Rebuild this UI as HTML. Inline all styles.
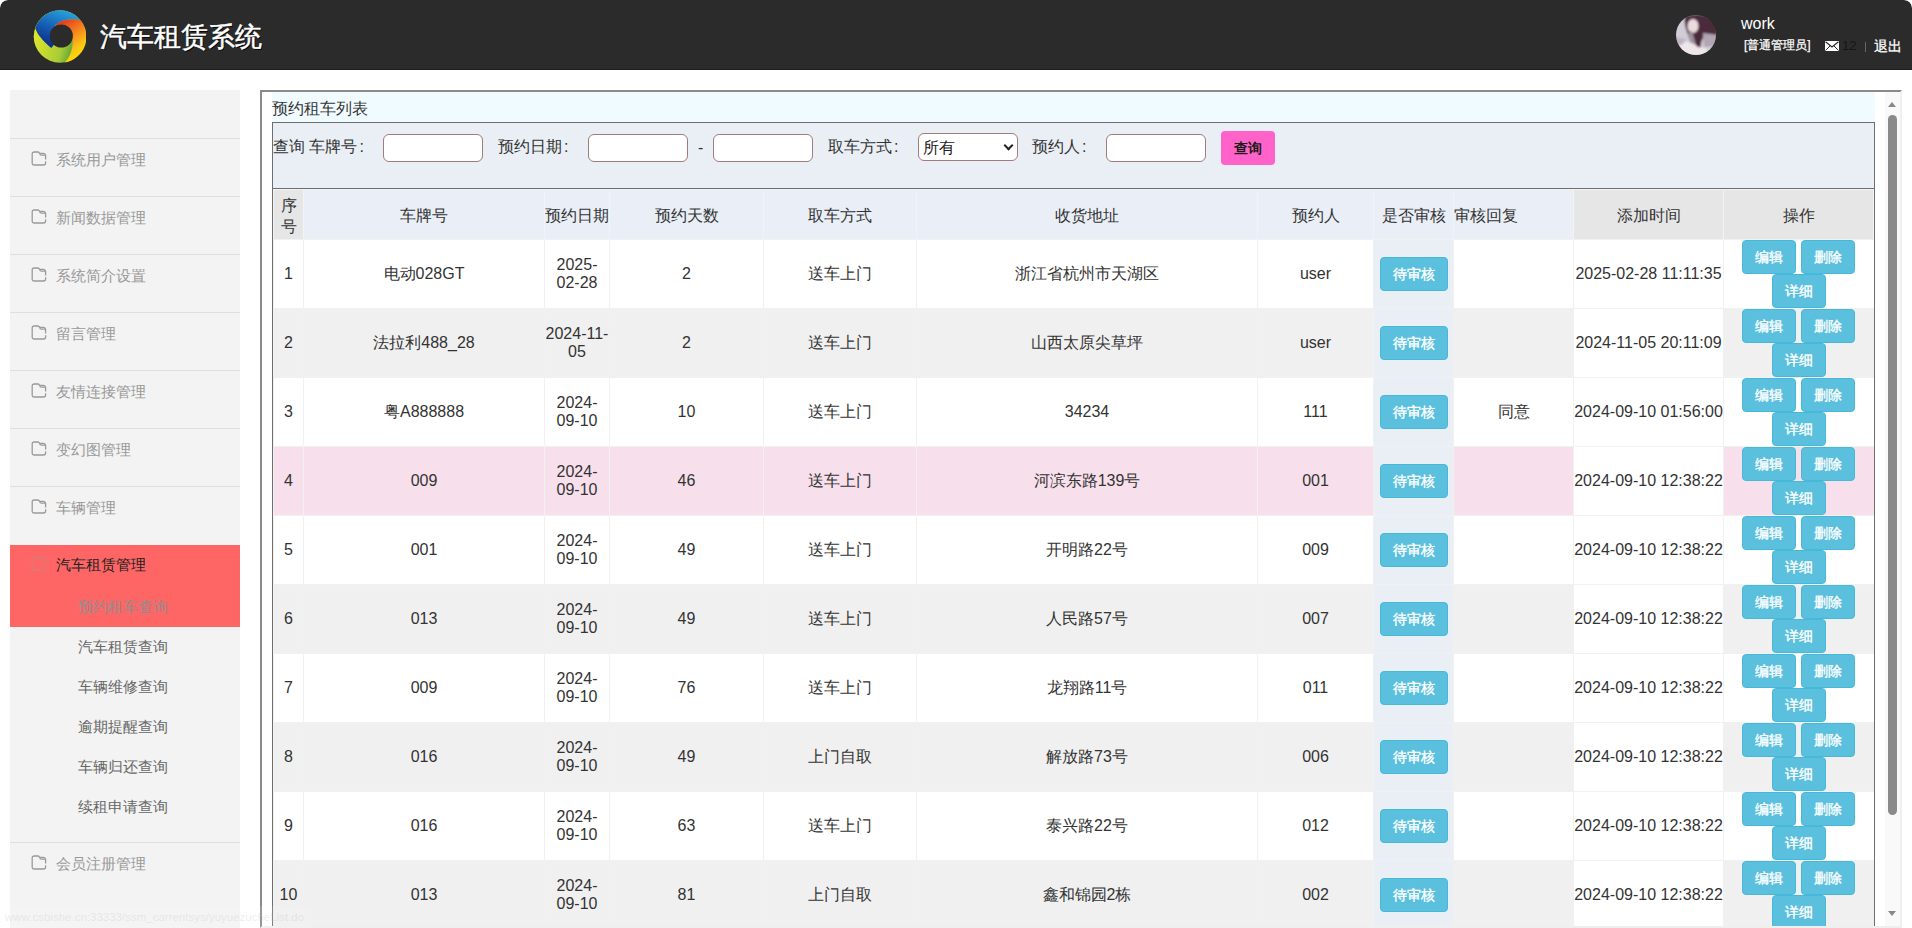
<!DOCTYPE html>
<html><head><meta charset="utf-8"><title>汽车租赁系统</title>
<style>
*{box-sizing:border-box}
html,body{margin:0;padding:0;width:1912px;height:928px;overflow:hidden;background:#fff;font-family:"Liberation Sans",sans-serif;color:#333}
.abs{position:absolute}
#hd{position:absolute;left:0;top:0;width:1912px;height:70px;background:#2b2b2b;border-bottom:1px solid #1e1e1e;border-radius:8px 8px 0 0}
#logo{position:absolute;left:33px;top:10px;width:53px;height:53px}
#title{position:absolute;left:100px;top:19px;font-family:"Liberation Serif",serif;font-size:27px;font-weight:normal;-webkit-text-stroke:0.5px #fff;color:#fff;letter-spacing:0px;line-height:36px;white-space:nowrap;text-shadow:1px 1px 0 #000}
#avatar{position:absolute;left:1676px;top:15px;width:40px;height:40px;border-radius:50%;overflow:hidden}
#uname{position:absolute;left:1741px;top:15px;font-size:16px;color:#fff;line-height:18px}
#urole{position:absolute;left:1744px;top:37px;font-size:12px;color:#fff;line-height:16px;white-space:nowrap;-webkit-text-stroke:0.25px #fff}
#mail{position:absolute;left:1825px;top:41px;width:14px;height:10px}
#mcount{position:absolute;left:1842px;top:38px;font-size:13px;color:#151515;line-height:16px}
#sep{position:absolute;left:1865px;top:42px;width:1px;height:10px;background:#666}
#logout{position:absolute;left:1874px;top:37px;font-size:14px;color:#fff;line-height:18px;white-space:nowrap;-webkit-text-stroke:0.3px #fff}

#side{position:absolute;left:10px;top:90px;width:230px;height:838px;background:#f3f3f3}
.mi{position:absolute;left:10px;width:230px;height:58px;border-top:1px solid #dedede}
.mi span{position:absolute;left:46px;top:11px;font-size:15px;line-height:20px;color:#999;white-space:nowrap}
.fold{position:absolute;left:21px;top:12px;width:16px;height:16px;line-height:0}
#act{position:absolute;left:10px;top:545px;width:230px;height:82px;background:#fe6665}
#act span{position:absolute;left:46px;top:10px;font-size:15px;line-height:20px;color:#222;white-space:nowrap}
#act .fold{top:11px;opacity:.35}
#act .s1{position:absolute;left:68px;top:52px;font-size:15px;line-height:20px;color:#8e8e8e;white-space:nowrap}
.sub{position:absolute;left:78px;font-size:15px;line-height:20px;color:#666;white-space:nowrap}

#frame{position:absolute;left:260px;top:90px;width:1642px;height:838px;border-style:solid;border-width:2px;border-color:#8a8a8a #efefef #efefef #8a8a8a;background:#fff;overflow:hidden}
#sb{position:absolute;left:1885px;top:92px;width:15px;height:834px;background:#f9f9f9}
#sb .up{position:absolute;left:3px;top:10px;width:0;height:0;border-left:4.5px solid transparent;border-right:4.5px solid transparent;border-bottom:5px solid #888}
#sb .dn{position:absolute;left:3px;top:819px;width:0;height:0;border-left:4.5px solid transparent;border-right:4.5px solid transparent;border-top:5px solid #888}
#sb .th{position:absolute;left:3px;top:23px;width:9px;height:700px;background:#8a8a8a;border-radius:5px}

#ttl{position:absolute;left:272px;top:92px;width:1603px;height:30px;background:#f0fbff;font-size:16px;line-height:33px;padding-left:0;white-space:nowrap}
#panel{position:absolute;left:272px;top:122px;width:1603px;height:804px;border:1px solid #6e6e6e;border-bottom:0;background:#fff;overflow:hidden}
#srch{position:absolute;left:0;top:0;width:1601px;height:66px;background:#eaeff6;border-bottom:1px solid #6e6e6e}
.lb{position:absolute;top:13px;font-size:16px;line-height:22px;white-space:nowrap;color:#333}
.c{font-style:normal;margin-left:2px}
.ip{position:absolute;top:11px;width:100px;height:28px;border:1px solid #a07d7d;border-radius:6px;background:#fff}
.sel{position:absolute;top:10px;width:100px;height:28px;border:1px solid #a07d7d;border-radius:6px;background:#fff;font-size:16px;line-height:28px;padding-left:4px;color:#222}
.sel i{position:absolute;right:5px;top:8px;width:7px;height:7px;border-right:2px solid #222;border-bottom:2px solid #222;transform:rotate(45deg)}
.pbtn{position:absolute;left:948px;top:8px;width:54px;height:34px;background:#ff63c9;border-radius:4px;font-size:14px;line-height:34px;text-align:center;color:#1a1a1a;font-weight:bold}

table{position:absolute;left:0;top:66px;border-collapse:separate;border-spacing:0;table-layout:fixed;width:1601px}
td,th{padding:0;border-left:1px solid #f1f1f1;border-top:1px solid #f1f1f1;text-align:center;font-size:16px;font-weight:normal;line-height:17px;color:#333;vertical-align:middle;overflow:hidden}
th{height:50px;background:#eaeff7;border-color:#f1f4f6;line-height:21px;padding-top:2px}
th.g{background:#e6e6e6}
th.l{text-align:left}
td{height:69px;background:#fff;padding-bottom:2px}
td.dt{line-height:18px;padding-bottom:0}
td.op,td.sh{padding-bottom:0}
tr.odd td{background:#f0f0f0}
tr.hov td{background:#f7e0eb}
td.sh,tr.odd td.sh,tr.hov td.sh{background:#eaeff6}
td.tm,tr.odd td.tm,tr.hov td.tm{background:#fff}
.btn{display:inline-block;height:34px;padding:0 12px;font-size:14px;line-height:32px;border:1px solid #46b8da;border-radius:4px;background:#5bc0de;color:#fff;white-space:nowrap;vertical-align:top;font-weight:normal;-webkit-text-stroke:0.35px #fff}
td.op{line-height:0;font-size:0;text-align:left;padding-left:18px}
td.op .btn{width:54px}
td.op .b2{margin-left:5px}
td.op .b3{margin-left:30px}
td.sh .btn{width:68px;font-weight:normal}
</style></head><body>
<div id="hd">
 <svg id="logo" viewBox="0 0 53 53">
  <defs>
   <linearGradient id="gb" x1="0.8" y1="0" x2="0.3" y2="1"><stop offset="0" stop-color="#27a9e1"/><stop offset="0.5" stop-color="#1763b8"/><stop offset="1" stop-color="#0a2a86"/></linearGradient>
   <linearGradient id="go" x1="0.1" y1="0" x2="0.6" y2="1"><stop offset="0" stop-color="#d9281f"/><stop offset="0.4" stop-color="#f47a20"/><stop offset="0.75" stop-color="#fbc316"/><stop offset="1" stop-color="#ffe000"/></linearGradient>
   <linearGradient id="gg" x1="0" y1="0.3" x2="1" y2="0.6"><stop offset="0" stop-color="#e6e82a"/><stop offset="0.6" stop-color="#a9cc36"/><stop offset="1" stop-color="#1f8236"/></linearGradient>
  </defs>
  <circle cx="27" cy="26.5" r="26.3" fill="url(#gg)"/>
  <path d="M2.2 18.3 A26.3 26.3 0 0 1 47.4 9.9 C40 8.5 30 8.5 22.2 15.1 L28 26 L18.3 38 C12 33 5 26 2.2 18.3 Z" fill="url(#gb)"/>
  <path d="M22.2 15.1 C30 8.5 40 8.5 47.4 9.9 A26.3 26.3 0 0 1 31.9 52.6 C36 48 40.5 40 39.5 29 L28 26 Z" fill="url(#go)"/>
  <circle cx="28.3" cy="26" r="11.6" fill="#2b2b2b"/>
 </svg>
 <div id="title">汽车租赁系统</div>
 <div id="avatar"><svg width="40" height="40" viewBox="0 0 40 40"><defs><filter id="bl"><feGaussianBlur stdDeviation="0.9"/></filter></defs><g filter="url(#bl)"><rect x="-4" y="-4" width="48" height="48" fill="#d3ccd9"/><path d="M9 2 C16 -2 30 -2 38 6 C42 12 42 20 40 24 L30 20 C26 22 24 30 25 34 L18 34 C14 26 12 20 10 14 C9 10 8 6 9 2Z" fill="#4b2b3b"/><ellipse cx="17" cy="11" rx="5.5" ry="7" fill="#eadcdf"/><path d="M27 18 L42 20 L42 31 L28 32Z" fill="#b3a5b3"/><path d="M12 18 L16 16 L20 30 L15 31Z" fill="#9c939c"/><path d="M2 30 C8 25 16 27 22 32 L30 33 L34 42 L-2 42Z" fill="#efe6ea"/><path d="M-2 22 L10 24 L6 30 L-2 30Z" fill="#bdb6c0"/></g></svg></div>
 <div id="uname">work</div>
 <div id="urole">[普通管理员]</div>
 <svg id="mail" viewBox="0 0 14 10"><rect x="0" y="0" width="14" height="10" fill="#fff"/><path d="M0.5 0.8 L7 6 L13.5 0.8" stroke="#2b2b2b" stroke-width="1.2" fill="none"/><path d="M0.5 9.5 L5 5 M13.5 9.5 L9 5" stroke="#2b2b2b" stroke-width="1" fill="none"/></svg>
 <div id="mcount">12</div>
 <div id="sep"></div>
 <div id="logout">退出</div>
</div>

<div id="side"></div>
<div class="mi" style="top:90px;height:48px;border-top:none"></div>
<div class="mi" style="top:138px"><i class="fold"><svg width="16" height="16" viewBox="0 0 16 16"><path d="M1.2 12 V3 Q1.2 1 3.2 1 H6.6 Q7.8 1 8.3 2 L8.6 2.4 H12.6 Q14.4 2.4 14.6 4.4 V8.4 M14.6 10.2 V12 Q14.6 14 12.6 14 H3.2 Q1.2 14 1.2 12 M8.6 2.4 Q9 4.2 10.4 4.2 H14.4" stroke="#9a9a9a" stroke-width="1.3" fill="none"/></svg></i><span>系统用户管理</span></div>
<div class="mi" style="top:196px"><i class="fold"><svg width="16" height="16" viewBox="0 0 16 16"><path d="M1.2 12 V3 Q1.2 1 3.2 1 H6.6 Q7.8 1 8.3 2 L8.6 2.4 H12.6 Q14.4 2.4 14.6 4.4 V8.4 M14.6 10.2 V12 Q14.6 14 12.6 14 H3.2 Q1.2 14 1.2 12 M8.6 2.4 Q9 4.2 10.4 4.2 H14.4" stroke="#9a9a9a" stroke-width="1.3" fill="none"/></svg></i><span>新闻数据管理</span></div>
<div class="mi" style="top:254px"><i class="fold"><svg width="16" height="16" viewBox="0 0 16 16"><path d="M1.2 12 V3 Q1.2 1 3.2 1 H6.6 Q7.8 1 8.3 2 L8.6 2.4 H12.6 Q14.4 2.4 14.6 4.4 V8.4 M14.6 10.2 V12 Q14.6 14 12.6 14 H3.2 Q1.2 14 1.2 12 M8.6 2.4 Q9 4.2 10.4 4.2 H14.4" stroke="#9a9a9a" stroke-width="1.3" fill="none"/></svg></i><span>系统简介设置</span></div>
<div class="mi" style="top:312px"><i class="fold"><svg width="16" height="16" viewBox="0 0 16 16"><path d="M1.2 12 V3 Q1.2 1 3.2 1 H6.6 Q7.8 1 8.3 2 L8.6 2.4 H12.6 Q14.4 2.4 14.6 4.4 V8.4 M14.6 10.2 V12 Q14.6 14 12.6 14 H3.2 Q1.2 14 1.2 12 M8.6 2.4 Q9 4.2 10.4 4.2 H14.4" stroke="#9a9a9a" stroke-width="1.3" fill="none"/></svg></i><span>留言管理</span></div>
<div class="mi" style="top:370px"><i class="fold"><svg width="16" height="16" viewBox="0 0 16 16"><path d="M1.2 12 V3 Q1.2 1 3.2 1 H6.6 Q7.8 1 8.3 2 L8.6 2.4 H12.6 Q14.4 2.4 14.6 4.4 V8.4 M14.6 10.2 V12 Q14.6 14 12.6 14 H3.2 Q1.2 14 1.2 12 M8.6 2.4 Q9 4.2 10.4 4.2 H14.4" stroke="#9a9a9a" stroke-width="1.3" fill="none"/></svg></i><span>友情连接管理</span></div>
<div class="mi" style="top:428px"><i class="fold"><svg width="16" height="16" viewBox="0 0 16 16"><path d="M1.2 12 V3 Q1.2 1 3.2 1 H6.6 Q7.8 1 8.3 2 L8.6 2.4 H12.6 Q14.4 2.4 14.6 4.4 V8.4 M14.6 10.2 V12 Q14.6 14 12.6 14 H3.2 Q1.2 14 1.2 12 M8.6 2.4 Q9 4.2 10.4 4.2 H14.4" stroke="#9a9a9a" stroke-width="1.3" fill="none"/></svg></i><span>变幻图管理</span></div>
<div class="mi" style="top:486px"><i class="fold"><svg width="16" height="16" viewBox="0 0 16 16"><path d="M1.2 12 V3 Q1.2 1 3.2 1 H6.6 Q7.8 1 8.3 2 L8.6 2.4 H12.6 Q14.4 2.4 14.6 4.4 V8.4 M14.6 10.2 V12 Q14.6 14 12.6 14 H3.2 Q1.2 14 1.2 12 M8.6 2.4 Q9 4.2 10.4 4.2 H14.4" stroke="#9a9a9a" stroke-width="1.3" fill="none"/></svg></i><span>车辆管理</span></div>
<div id="act"><i class="fold"><svg width="16" height="16" viewBox="0 0 16 16"><path d="M1.2 12 V3 Q1.2 1 3.2 1 H6.6 Q7.8 1 8.3 2 L8.6 2.4 H12.6 Q14.4 2.4 14.6 4.4 V8.4 M14.6 10.2 V12 Q14.6 14 12.6 14 H3.2 Q1.2 14 1.2 12 M8.6 2.4 Q9 4.2 10.4 4.2 H14.4" stroke="#9a9a9a" stroke-width="1.3" fill="none"/></svg></i><span>汽车租赁管理</span><div class="s1">预约租车查询</div></div>
<div class="sub" style="top:637px">汽车租赁查询</div>
<div class="sub" style="top:677px">车辆维修查询</div>
<div class="sub" style="top:717px">逾期提醒查询</div>
<div class="sub" style="top:757px">车辆归还查询</div>
<div class="sub" style="top:797px">续租申请查询</div>
<div class="mi" style="top:842px"><i class="fold"><svg width="16" height="16" viewBox="0 0 16 16"><path d="M1.2 12 V3 Q1.2 1 3.2 1 H6.6 Q7.8 1 8.3 2 L8.6 2.4 H12.6 Q14.4 2.4 14.6 4.4 V8.4 M14.6 10.2 V12 Q14.6 14 12.6 14 H3.2 Q1.2 14 1.2 12 M8.6 2.4 Q9 4.2 10.4 4.2 H14.4" stroke="#9a9a9a" stroke-width="1.3" fill="none"/></svg></i><span>会员注册管理</span></div>

<div id="frame"></div>
<div id="ttl">预约租车列表</div>
<div id="panel">
 <div id="srch">
  <div class="lb" style="left:0">查询 车牌号<i class="c">:</i></div>
  <div class="ip" style="left:110px"></div>
  <div class="lb" style="left:225px">预约日期<i class="c">:</i></div>
  <div class="ip" style="left:315px"></div>
  <div class="lb" style="left:425px;top:14px">-</div>
  <div class="ip" style="left:440px"></div>
  <div class="lb" style="left:555px">取车方式<i class="c">:</i></div>
  <div class="sel" style="left:645px">所有<i></i></div>
  <div class="lb" style="left:759px">预约人<i class="c">:</i></div>
  <div class="ip" style="left:833px"></div>
  <div class="pbtn">查询</div>
 </div>
 <table>
  <colgroup><col style="width:30px"><col style="width:241px"><col style="width:65px"><col style="width:154px"><col style="width:153px"><col style="width:341px"><col style="width:116px"><col style="width:80px"><col style="width:120px"><col style="width:150px"><col style="width:151px"></colgroup>
  <thead><tr><th class="g">序号</th><th>车牌号</th><th>预约日期</th><th>预约天数</th><th>取车方式</th><th>收货地址</th><th>预约人</th><th>是否审核</th><th class="l">审核回复</th><th class="g">添加时间</th><th class="g" style="border-right:1px solid #f4f6f9">操作</th></tr></thead>
  <tbody>
<tr><td>1</td><td>电动028GT</td><td class="dt">2025-<br>02-28</td><td>2</td><td>送车上门</td><td>浙江省杭州市天湖区</td><td>user</td><td class="sh"><span class="btn bi w3">待审核</span></td><td></td><td class="tm">2025-02-28 11:11:35</td><td class="op"><span class="btn bi">编辑</span><span class="btn bi b2">删除</span><br><span class="btn bi b3">详细</span></td></tr>
<tr class="odd"><td>2</td><td>法拉利488_28</td><td class="dt">2024-11-<br>05</td><td>2</td><td>送车上门</td><td>山西太原尖草坪</td><td>user</td><td class="sh"><span class="btn bi w3">待审核</span></td><td></td><td class="tm">2024-11-05 20:11:09</td><td class="op"><span class="btn bi">编辑</span><span class="btn bi b2">删除</span><br><span class="btn bi b3">详细</span></td></tr>
<tr><td>3</td><td>粤A888888</td><td class="dt">2024-<br>09-10</td><td>10</td><td>送车上门</td><td>34234</td><td>111</td><td class="sh"><span class="btn bi w3">待审核</span></td><td>同意</td><td class="tm">2024-09-10 01:56:00</td><td class="op"><span class="btn bi">编辑</span><span class="btn bi b2">删除</span><br><span class="btn bi b3">详细</span></td></tr>
<tr class="hov"><td>4</td><td>009</td><td class="dt">2024-<br>09-10</td><td>46</td><td>送车上门</td><td>河滨东路139号</td><td>001</td><td class="sh"><span class="btn bi w3">待审核</span></td><td></td><td class="tm">2024-09-10 12:38:22</td><td class="op"><span class="btn bi">编辑</span><span class="btn bi b2">删除</span><br><span class="btn bi b3">详细</span></td></tr>
<tr><td>5</td><td>001</td><td class="dt">2024-<br>09-10</td><td>49</td><td>送车上门</td><td>开明路22号</td><td>009</td><td class="sh"><span class="btn bi w3">待审核</span></td><td></td><td class="tm">2024-09-10 12:38:22</td><td class="op"><span class="btn bi">编辑</span><span class="btn bi b2">删除</span><br><span class="btn bi b3">详细</span></td></tr>
<tr class="odd"><td>6</td><td>013</td><td class="dt">2024-<br>09-10</td><td>49</td><td>送车上门</td><td>人民路57号</td><td>007</td><td class="sh"><span class="btn bi w3">待审核</span></td><td></td><td class="tm">2024-09-10 12:38:22</td><td class="op"><span class="btn bi">编辑</span><span class="btn bi b2">删除</span><br><span class="btn bi b3">详细</span></td></tr>
<tr><td>7</td><td>009</td><td class="dt">2024-<br>09-10</td><td>76</td><td>送车上门</td><td>龙翔路11号</td><td>011</td><td class="sh"><span class="btn bi w3">待审核</span></td><td></td><td class="tm">2024-09-10 12:38:22</td><td class="op"><span class="btn bi">编辑</span><span class="btn bi b2">删除</span><br><span class="btn bi b3">详细</span></td></tr>
<tr class="odd"><td>8</td><td>016</td><td class="dt">2024-<br>09-10</td><td>49</td><td>上门自取</td><td>解放路73号</td><td>006</td><td class="sh"><span class="btn bi w3">待审核</span></td><td></td><td class="tm">2024-09-10 12:38:22</td><td class="op"><span class="btn bi">编辑</span><span class="btn bi b2">删除</span><br><span class="btn bi b3">详细</span></td></tr>
<tr><td>9</td><td>016</td><td class="dt">2024-<br>09-10</td><td>63</td><td>送车上门</td><td>泰兴路22号</td><td>012</td><td class="sh"><span class="btn bi w3">待审核</span></td><td></td><td class="tm">2024-09-10 12:38:22</td><td class="op"><span class="btn bi">编辑</span><span class="btn bi b2">删除</span><br><span class="btn bi b3">详细</span></td></tr>
<tr class="odd"><td>10</td><td>013</td><td class="dt">2024-<br>09-10</td><td>81</td><td>上门自取</td><td>鑫和锦园2栋</td><td>002</td><td class="sh"><span class="btn bi w3">待审核</span></td><td></td><td class="tm">2024-09-10 12:38:22</td><td class="op"><span class="btn bi">编辑</span><span class="btn bi b2">删除</span><br><span class="btn bi b3">详细</span></td></tr>
  </tbody>
 </table>
</div>
<div id="sb"><div class="up"></div><div class="th"></div><div class="dn"></div></div>
<div id="status" style="position:absolute;left:0;top:906px;width:312px;height:22px;background:rgba(255,255,255,0.12);font-size:11.5px;line-height:22px;padding-left:5px;color:rgba(190,190,190,0.28);white-space:nowrap;letter-spacing:0">www.csbishe.cn:33333/ssm_carrentsys/yuyuezucheList.do</div>
<div style="position:absolute;left:0;top:0;width:1912px;height:928px;border-radius:8px;box-shadow:0 0 0 12px #fff;pointer-events:none"></div>
</body></html>
